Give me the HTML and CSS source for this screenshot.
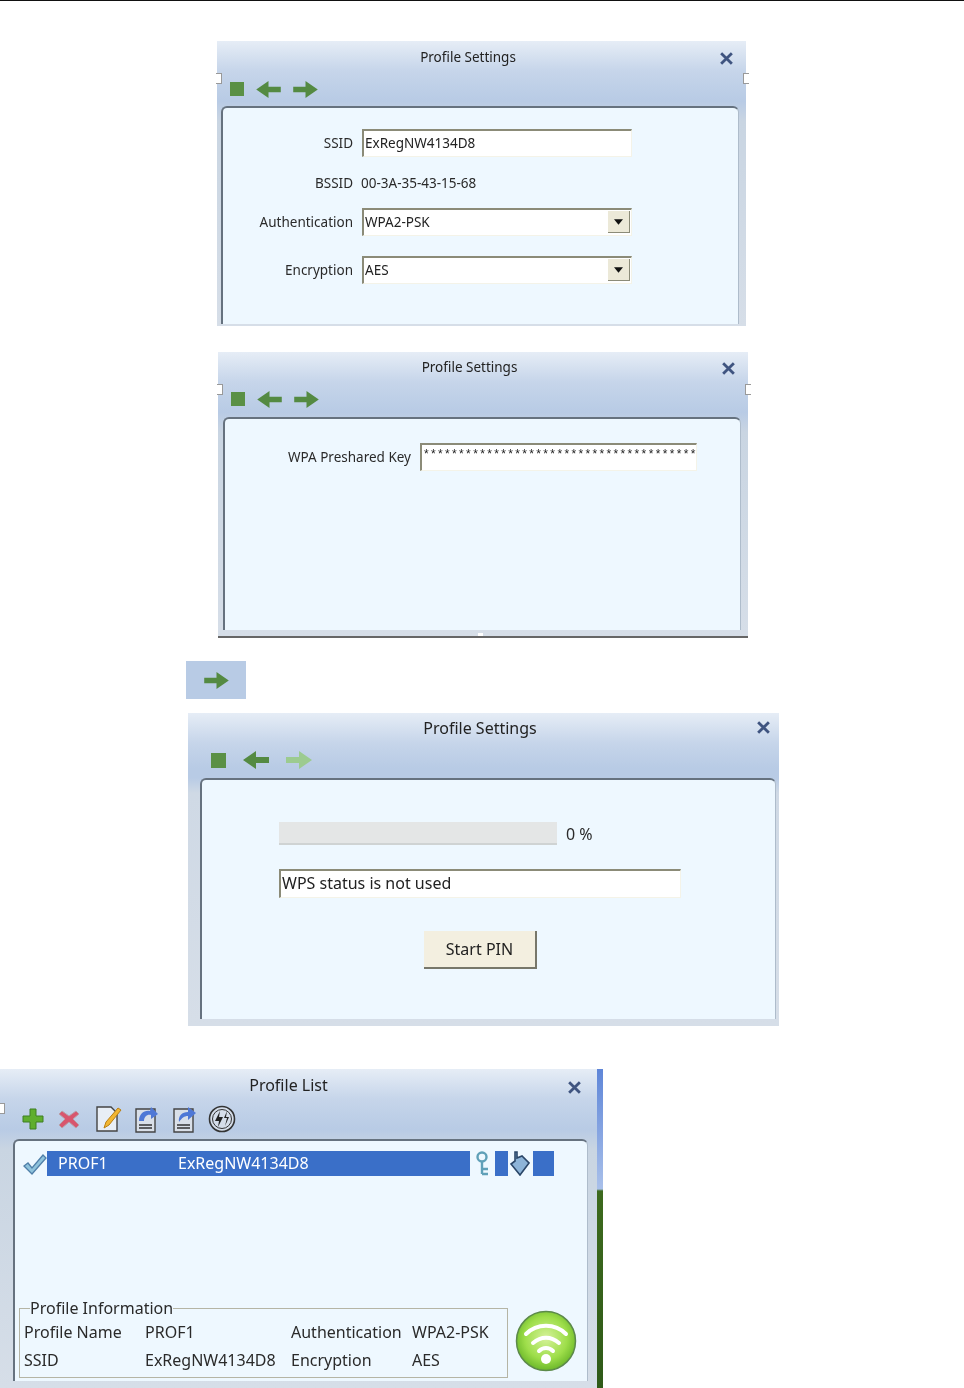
FILE: index.html
```html
<!DOCTYPE html>
<html lang="en">
<head>
    <meta charset="UTF-8">
    <title>Profile Settings</title>
    <link rel="stylesheet" href="styles.css">
</head>
<body>
    <svg class="defs" width="0" height="0">
        <symbol id="arrow-right" viewBox="0 0 26 18"><polygon points="0,6 13,6 13,0 26,9 13,18 13,12 0,12"/></symbol>
        <symbol id="arrow-left" viewBox="0 0 26 18"><polygon points="26,6 13,6 13,0 0,9 13,18 13,12 26,12"/></symbol>
        <symbol id="close-x" viewBox="0 0 14 14"><path d="M2 2 L12 12 M12 2 L2 12" fill="none" stroke="#3f5480" stroke-width="2.6"/></symbol>
        <symbol id="combo-btn" viewBox="0 0 10 6"><polygon points="0,0 10,0 5,6" fill="#111"/></symbol>
    </svg>

    <section class="win win-a">
        <span class="handle handle-l"></span><span class="handle handle-r"></span>
        <svg class="close"><use href="#close-x"/></svg>
        <div class="title">Profile Settings</div>
        <div class="toolbar">
            <span class="stop"></span>
            <svg class="arrow"><use href="#arrow-left"/></svg>
            <svg class="arrow"><use href="#arrow-right"/></svg>
        </div>
        <div class="panel form-a">
            <div class="row row-ssid">
                <label>SSID</label>
                <div class="field">ExRegNW4134D8</div>
            </div>
            <div class="row row-bssid">
                <label>BSSID</label>
                <div class="plain">00-3A-35-43-15-68</div>
            </div>
            <div class="row row-auth">
                <label>Authentication</label>
                <div class="field combo">WPA2-PSK<span class="combo-arrow"><svg><use href="#combo-btn"/></svg></span></div>
            </div>
            <div class="row row-enc">
                <label>Encryption</label>
                <div class="field combo">AES<span class="combo-arrow"><svg><use href="#combo-btn"/></svg></span></div>
            </div>
        </div>
    </section>

    <section class="win win-b">
        <span class="handle handle-l"></span><span class="handle handle-r"></span><span class="handle handle-b"></span>
        <svg class="close"><use href="#close-x"/></svg>
        <div class="title">Profile Settings</div>
        <div class="toolbar">
            <span class="stop"></span>
            <svg class="arrow"><use href="#arrow-left"/></svg>
            <svg class="arrow"><use href="#arrow-right"/></svg>
        </div>
        <div class="panel form-b">
            <div class="row">
                <label>WPA Preshared Key</label>
                <div class="field key">***************************************</div>
            </div>
        </div>
    </section>

    <div class="next-tile"><svg class="arrow"><use href="#arrow-right"/></svg></div>

    <section class="win win-c">
        <svg class="close"><use href="#close-x"/></svg>
        <div class="title">Profile Settings</div>
        <div class="toolbar">
            <span class="stop"></span>
            <svg class="arrow"><use href="#arrow-left"/></svg>
            <svg class="arrow faded"><use href="#arrow-right"/></svg>
        </div>
        <div class="panel form-c">
            <div class="progress-row">
                <div class="progress"></div>
                <span>0 %</span>
            </div>
            <div class="field status">WPS status is not used</div>
            <button class="start-btn">Start PIN</button>
        </div>
    </section>

    <div class="list-wrap">
        <section class="win win-d">
            <span class="handle handle-l"></span>
            <svg class="close"><use href="#close-x"/></svg>
            <div class="title">Profile List</div>
            <div class="toolbar">
                <svg class="tool" width="22" height="24" viewBox="0 0 22 24"><path d="M8 2h6v7h7v6h-7v7H8v-7H1V9h7z" fill="#5fae2e" stroke="#3f7f22"/></svg>
                <svg class="tool" width="22" height="24" viewBox="0 0 22 24"><path d="M4 4l7 5 7-5 3 3-6 5 6 6-3 3-7-6-7 6-3-3 6-6-6-5z" fill="#d8566e" stroke="#b8a0a8"/></svg>
                <svg class="tool" width="28" height="28" viewBox="0 0 28 28"><path d="M2 2h14l6 6v18H2z" fill="#e8eef6" stroke="#444" stroke-width="1.4"/><path d="M9 23l2-6L23 3l3 2-12 15z" fill="#f2b632" stroke="#b97f14"/></svg>
                <svg class="tool" width="26" height="28" viewBox="0 0 26 28"><path d="M2 4h19v23H2z" fill="#d9dfe8" stroke="#444" stroke-width="1.4"/><path d="M5 20h13M5 23h13" stroke="#333" stroke-width="1.6"/><path d="M5 16c0-7 5-11 11-10l1-4 7 7-7 5v-4c-4-1-7 2-7 6z" fill="#4f78d6"/></svg>
                <svg class="tool" width="26" height="28" viewBox="0 0 26 28"><path d="M2 4h19v23H2z" fill="#d9dfe8" stroke="#444" stroke-width="1.4"/><path d="M5 20h13M5 23h13" stroke="#333" stroke-width="1.6"/><path d="M7 17c-1-6 3-10 9-10V2l8 6-8 7v-4c-4 0-6 2-9 6z" fill="#4f78d6"/></svg>
                <svg class="tool" width="28" height="28" viewBox="0 0 28 28"><ellipse cx="14" cy="14" rx="12.5" ry="12.5" fill="#d5dde9" stroke="#333" stroke-width="1.6"/><circle cx="14" cy="14" r="9.5" fill="none" stroke="#333"/><path d="M12 6l-5 10h4l-1 6 5-10h-4zM19 6l-3 7h3l-2 8 4-9h-3z" fill="#222"/></svg>
            </div>
            <div class="panel list-panel">
                <div class="profile-row">
                    <svg class="check" width="24" height="22" viewBox="0 0 24 22"><path d="M1 13l4-3 4 5L20 2l3 3L9 21z" fill="#8fc3dc" stroke="#4f7fa8" stroke-width="1.3"/></svg>
                    <div class="sel-bar">
                        <span class="sel-name">PROF1</span>
                        <span>ExRegNW4134D8</span>
                    </div>
                    <svg class="key-icon" width="14" height="25" viewBox="0 0 14 25"><circle cx="6" cy="6" r="4.5" fill="none" stroke="#5fa0b8" stroke-width="2.4"/><path d="M6 11v12M6 18h6M6 23h6" stroke="#5fa0b8" stroke-width="2.4" fill="none"/></svg>
                    <span class="sel-block block-small"></span>
                    <svg class="net-icon" width="20" height="25" viewBox="0 0 20 25"><path d="M5 1h2v6l5-2 7 7-9 12-9-11 4-3z" fill="#8db4d8" stroke="#2a4668" stroke-width="1.6"/></svg>
                    <span class="sel-block block-big"></span>
                </div>
                <div class="info-row">
                    <fieldset class="info">
                        <legend>Profile Information</legend>
                        <div class="info-grid">
                            <span>Profile Name</span><span>PROF1</span><span>Authentication</span><span>WPA2-PSK</span>
                            <span>SSID</span><span>ExRegNW4134D8</span><span>Encryption</span><span>AES</span>
                        </div>
                    </fieldset>
                    <svg class="wifi" width="62" height="62" viewBox="0 0 62 62">
                        <defs>
                            <radialGradient id="wifi-green" cx="50%" cy="45%" r="55%">
                                <stop offset="0" stop-color="#d6f29a"/>
                                <stop offset="0.65" stop-color="#9ede4a"/>
                                <stop offset="1" stop-color="#6cb82a"/>
                            </radialGradient>
                        </defs>
                        <circle cx="31" cy="31" r="29.5" fill="url(#wifi-green)" stroke="#5c8a4a" stroke-width="1.5"/>
                        <path d="M11 24C22 13 40 13 51 24M18 33C26 26 36 26 44 33M24 41C28 37 34 37 38 41" fill="none" stroke="#fff" stroke-width="4" stroke-linecap="round"/>
                        <circle cx="31" cy="49" r="5" fill="#fff"/>
                    </svg>
                </div>
            </div>
        </section>
        <div class="desktop-strip"></div>
    </div>
</body>
</html>
```

FILE: styles.css
```css
body {
    margin: 0;
    border-top: 1px solid #111;
    height: 1387px;
    overflow: hidden;
    background-color: white;
    font-family: "Noto Sans", "Liberation Sans", sans-serif;
    font-size: 14px;
    color: #2a2a2a;
}
.defs {
    display: block;
    height: 0;
}
.win {
    position: relative;
    display: flex;
    flex-direction: column;
    box-sizing: border-box;
    background: linear-gradient(180deg, #e6edf6 0, #c6d5ea 30px, #b8cbe5 60px, #c9d5e2 80px, #d6dee8 100%);
    filter: blur(0.45px);
}
.title {
    text-align: center;
    color: #222;
}
.toolbar {
    display: flex;
    align-items: center;
}
.stop {
    width: 14px;
    height: 14px;
    background-color: #5a9045;
}
.arrow {
    width: 25px;
    height: 17px;
    fill: #548a42;
}
.arrow.faded {
    fill: #9ccb90;
}
.close {
    position: absolute;
    width: 15px;
    height: 15px;
}
.handle {
    position: absolute;
    width: 5px;
    height: 9px;
    background-color: white;
    border: 1px solid #999;
}
.handle-l {
    left: -1px;
    top: 32px;
    border-left: none;
}
.handle-r {
    right: -3px;
    top: 32px;
    border-right: none;
}
.handle-b {
    left: 260px;
    bottom: 0;
    height: 3px;
    border: none;
}
.panel {
    flex: 1;
    box-sizing: border-box;
    background-color: #eef8ff;
    border-top: 2px solid #66727f;
    border-left: 2px solid #66727f;
    border-right: 1px solid #aebccb;
    border-radius: 6px 6px 0 0;
}
.row {
    display: flex;
    align-items: center;
}
.row label {
    text-align: right;
    flex: none;
}
.field {
    position: relative;
    box-sizing: border-box;
    background-color: white;
    border-top: 2px solid #8b8b78;
    border-left: 2px solid #8b8b78;
    border-right: 1px solid #f4f3e8;
    border-bottom: 1px solid #f4f3e8;
    padding-left: 1px;
    color: #222;
    white-space: nowrap;
    overflow: hidden;
}
.combo-arrow {
    position: absolute;
    right: 1px;
    top: 1px;
    bottom: 2px;
    width: 22px;
    display: flex;
    align-items: center;
    justify-content: center;
    background-color: #ece9d8;
    border-right: 1px solid #8b8b78;
    border-bottom: 1px solid #8b8b78;
    box-sizing: border-box;
}
.combo-arrow svg {
    width: 9px;
    height: 6px;
}

/* first settings window */
.win-a {
    width: 529px;
    height: 285px;
    margin: 40px 0 0 217px;
}
.win-a .title,
.win-b .title {
    padding-top: 7px;
    height: 24px;
    margin-right: 27px;
    font-size: 13.5px;
}
.win-a .toolbar,
.win-b .toolbar {
    height: 34px;
    padding-left: 13px;
    gap: 12px;
}
.win-a .close {
    right: 12px;
    top: 10px;
}
.win-a .panel {
    margin: 0 7px 2px 4px;
    padding-top: 21px;
    font-size: 13.5px;
}
.form-a .row label {
    width: 130px;
    margin-right: 9px;
}
.form-a .field {
    width: 270px;
    height: 28px;
    line-height: 24px;
}
.form-a .plain {
    margin-left: -1px;
}
.row-bssid {
    height: 20px;
    margin-top: 16px;
}
.row-auth {
    margin-top: 15px;
}
.row-enc {
    margin-top: 20px;
}

/* preshared key window */
.win-b {
    width: 530px;
    height: 286px;
    margin: 26px 0 0 218px;
    border-bottom: 2px solid #666;
}
.win-b .close {
    right: 12px;
    top: 9px;
}
.win-b .panel {
    margin: 1px 7px 6px 5px;
    padding-top: 24px;
    font-size: 13.5px;
}
.win-b .title {
    padding-top: 6px;
}
.form-b .row {
    align-items: flex-start;
}
.form-b label {
    width: 186px;
    margin-right: 9px;
    line-height: 28px;
}
.key {
    width: 277px;
    height: 28px;
    padding-left: 2px;
    line-height: 18px;
    font-family: "Liberation Sans", sans-serif;
    font-size: 12px;
    letter-spacing: 2.35px;
}

.next-tile {
    display: flex;
    align-items: center;
    justify-content: center;
    width: 60px;
    height: 38px;
    margin: 23px 0 0 186px;
    background-color: #b8cbe5;
}

/* wps window */
.win-c {
    width: 591px;
    height: 313px;
    margin: 14px 0 0 188px;
    background: linear-gradient(180deg, #e6edf6 0, #c6d5ea 30px, #b8cbe5 55px, #b8cbe5 65px, #cfd9e5 80px, #d6dee8 100%);
}
.win-c .title {
    height: 29px;
    padding-top: 4px;
    box-sizing: border-box;
    margin-right: 7px;
    font-size: 16px;
}
.win-c .toolbar {
    height: 36px;
    padding-left: 23px;
    gap: 17px;
}
.win-c .stop {
    width: 15px;
    height: 15px;
}
.win-c .arrow {
    width: 26px;
    height: 18px;
}
.win-c .close {
    right: 8px;
    top: 7px;
}
.win-c .panel {
    margin: 0 3px 7px 12px;
    padding: 42px 0 0 77px;
    font-size: 16px;
}
.progress-row {
    display: flex;
    align-items: center;
    gap: 9px;
    height: 23px;
}
.progress {
    width: 278px;
    height: 23px;
    box-sizing: border-box;
    background-color: #e4e6e6;
    border-bottom: 2px solid #cfd3d3;
}
.status {
    width: 402px;
    height: 29px;
    margin-top: 24px;
    line-height: 25px;
}
.start-btn {
    display: block;
    width: 113px;
    height: 38px;
    margin: 33px 0 0 145px;
    box-sizing: border-box;
    font-family: inherit;
    font-size: 16px;
    color: #222;
    background-color: #f3efe0;
    border: none;
    border-right: 2px solid #77776a;
    border-bottom: 2px solid #77776a;
}

/* profile list window */
.list-wrap {
    display: flex;
    width: 603px;
    height: 319px;
    margin-top: 43px;
}
.win-d {
    width: 597px;
    height: 319px;
    font-size: 16px;
}
.win-d .title {
    height: 29px;
    padding-top: 5px;
    box-sizing: border-box;
    margin-right: 20px;
}
.win-d .toolbar {
    height: 41px;
    padding-left: 22px;
}
.win-d .close {
    right: 15px;
    top: 11px;
}
.tool {
    flex: none;
}
.tool:nth-child(2) {
    margin-left: 14px;
}
.tool:nth-child(3) {
    margin-left: 15px;
}
.tool:nth-child(4) {
    margin-left: 11px;
}
.tool:nth-child(5) {
    margin-left: 12px;
}
.tool:nth-child(6) {
    margin-left: 10px;
}
.win-d .handle-l {
    top: 34px;
}
.list-panel {
    display: flex;
    flex-direction: column;
    margin: 0 9px 7px 13px;
    padding: 10px 0 0 0;
}
.profile-row {
    display: flex;
    align-items: center;
    height: 25px;
    padding-left: 8px;
    color: white;
}
.check {
    flex: none;
}
.sel-bar {
    display: flex;
    width: 423px;
    height: 25px;
    line-height: 25px;
    padding-left: 11px;
    box-sizing: border-box;
    background-color: #3a6fc8;
}
.sel-name {
    width: 120px;
}
.key-icon {
    margin-left: 6px;
}
.sel-block {
    height: 25px;
    background-color: #3a6fc8;
}
.block-small {
    width: 13px;
    margin-left: 5px;
}
.block-big {
    width: 21px;
    margin-left: 3px;
}
.net-icon {
    margin-left: 2px;
}
.info-row {
    display: flex;
    align-items: flex-end;
    margin-top: auto;
    padding: 0 10px 3px 4px;
}
.info {
    width: 489px;
    height: 80px;
    margin: 0;
    padding: 0 0 0 4px;
    box-sizing: border-box;
    border: 1px solid #b5b5a5;
}
.info legend {
    margin-left: 6px;
    padding: 0;
    line-height: 20px;
}
.info-grid {
    display: grid;
    grid-template-columns: 121px 146px 121px 1fr;
    grid-auto-rows: 28px;
    align-items: center;
}
.wifi {
    margin: 0 0 6px 7px;
}
.desktop-strip {
    width: 6px;
    background: linear-gradient(180deg, #5f86d8 0, #a9c0ea 120px, #3d6a1e 122px, #2f5a18 100%);
}
```
